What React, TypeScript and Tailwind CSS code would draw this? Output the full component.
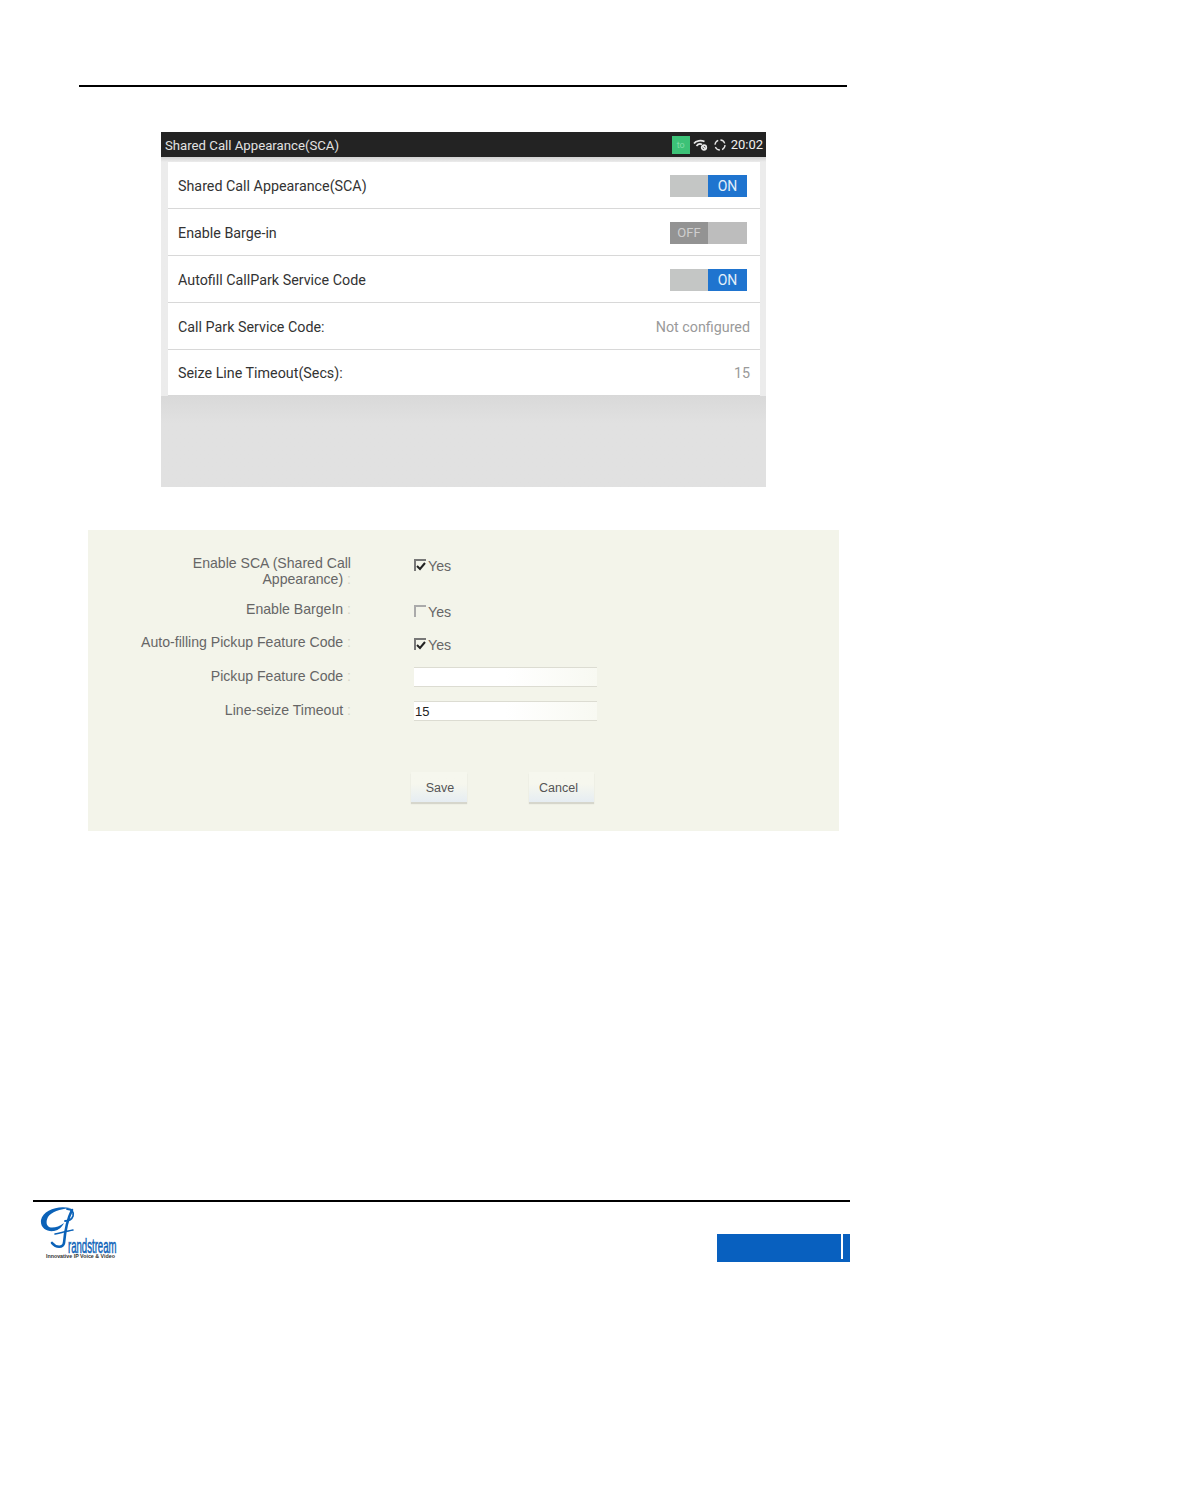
import React from 'react';

const rows = [
  { label: 'Shared Call Appearance(SCA)', toggle: 'on', h: 'h-[47px]' },
  { label: 'Enable Barge-in', toggle: 'off', h: 'h-[47px]' },
  { label: 'Autofill CallPark Service Code', toggle: 'on', h: 'h-[47px]' },
  { label: 'Call Park Service Code:', value: 'Not configured', h: 'h-[47px]' },
  { label: 'Seize Line Timeout(Secs):', value: '15', h: 'h-[46px]' },
];

function Toggle({ on }: { on: boolean }) {
  if (on) {
    return (
      <div className="flex h-[22px] w-[77px] text-[14px] leading-[22px]">
        <div className="w-[38px] bg-[#c4c6c5]" />
        <div className="w-[39px] bg-[#1f74cf] text-center text-[#e4effa]">ON</div>
      </div>
    );
  }
  return (
    <div className="flex h-[22px] w-[77px] text-[13px] leading-[22px]">
      <div className="w-[38px] bg-[#939393] text-center text-[#cfcfcf]">OFF</div>
      <div className="w-[39px] bg-[#bdbdbd]" />
    </div>
  );
}

function StatusIcons() {
  return (
    <div className="flex items-center">
      <div className="h-[18px] w-[18px] bg-[#3cc277] text-center text-[9px] leading-[18px] text-[#7fdca6]">to</div>
      <svg className="ml-[3px]" width="15" height="12" viewBox="0 0 15 12" fill="none" stroke="#e8e8e8" strokeWidth="1.700">
        <path d="M1 4.500C3 1.500 8 1 11.500 2.500" />
        <path d="M3.500 7c1.500-2 3.500-2.500 5.500-1.500" />
        <circle cx="11" cy="8.500" r="2.300" />
        <path d="M9.500 7l3 3" />
      </svg>
      <svg className="ml-[6px]" width="12" height="12" viewBox="0 0 12 12" fill="none" stroke="#e4e4e4" strokeWidth="1.300">
        <circle cx="6" cy="6" r="5" strokeDasharray="5.500 2.300" />
      </svg>
      <span className="ml-[5px] text-[13px] leading-none text-[#f0f0f0]">20:02</span>
    </div>
  );
}

function PhonePanel() {
  return (
    <div className="ml-[161px] mt-[45px] flex h-[355px] w-[605px] flex-col font-['Roboto',sans-serif]">
      <div className="flex h-[25px] items-center justify-between bg-[#232323] pl-[4px] pr-[3px] text-[13.200px] text-[#e2e2e2]">
        <span className="pt-[2px]">Shared Call Appearance(SCA)</span>
        <StatusIcons />
      </div>
      <div className="bg-gradient-to-b from-[#d2d2d2] to-[#ececec] to-[5px] px-[7px] pt-[5px]">
        <div className="w-[592px] bg-white">
          {rows.map((row) => (
            <div
              key={row.label}
              className={`flex ${row.h} items-center justify-between border-b border-[#d8d8d8] pl-[10px] pr-[10px] pt-[1px] text-[14.300px] text-[#333]`}
            >
              <span className="pt-[2px]">{row.label}</span>
              {row.toggle && (
                <div className="mr-[3px]">
                  <Toggle on={row.toggle === 'on'} />
                </div>
              )}
              {row.value && <span className="pt-[2px] text-[#9a9a9a]">{row.value}</span>}
            </div>
          ))}
        </div>
      </div>
      <div className="flex-1 bg-gradient-to-b from-[#d9d9d9] to-[#e1e1e1] to-30%" />
    </div>
  );
}

function FormLabel({ children, className = '' }: { children: React.ReactNode; className?: string }) {
  return (
    <div className={`w-[263px] text-right leading-[16px] ${className}`}>
      {children}
      <span className="text-[#d4d4c8]"> :</span>
    </div>
  );
}

function YesBox({ checked }: { checked: boolean }) {
  return (
    <div className="ml-[63px] flex items-center">
      <div className={`flex h-[12px] w-[12px] items-center justify-center border-l-2 border-t-2 ${checked ? 'border-[#777]' : 'border-[#aaa]'}`}>
        {checked && (
          <svg width="10" height="9" viewBox="0 0 10 9" fill="none" stroke="#222" strokeWidth="2">
            <path d="M1 4l3 3 5-6" />
          </svg>
        )}
      </div>
      <span className="ml-[2px] pt-[2px] text-[14.200px] leading-[16px]">Yes</span>
    </div>
  );
}

function TextBox({ value }: { value?: string }) {
  return (
    <div className="-mt-[1px] ml-[63px] h-[20px] w-[183px] border-y border-[#dcdcd2] bg-gradient-to-r from-white via-white to-[#f8f9f2] pl-[1px] text-[13px] leading-[20px] text-[#222]">
      {value}
    </div>
  );
}

function FormButton({ label, className }: { label: string; className: string }) {
  return (
    <div className={`h-[30px] bg-gradient-to-b from-[#f6f7ee] from-40% to-[#e6edf2] text-center text-[12.500px] leading-[32px] text-[#555] shadow-[0_2px_1px_#d6d6cc] ${className}`}>
      {label}
    </div>
  );
}

function SettingsForm() {
  return (
    <div className="ml-[88px] mt-[43px] h-[301px] w-[751px] bg-[#f3f4ea] pt-[25px] font-['Liberation_Sans',sans-serif] text-[14.100px] text-[#666]">
      <div className="flex h-[32px]">
        <FormLabel>
          Enable SCA (Shared Call
          <br />
          Appearance)
        </FormLabel>
        <div className="pt-[1px]"><YesBox checked /></div>
      </div>
      <div className="mt-[14px] flex h-[16px]">
        <FormLabel>Enable BargeIn</FormLabel>
        <div className="pt-[1px]"><YesBox checked={false} /></div>
      </div>
      <div className="mt-[17px] flex h-[16px]">
        <FormLabel>Auto-filling Pickup Feature Code</FormLabel>
        <div className="pt-[1px]"><YesBox checked /></div>
      </div>
      <div className="mt-[18px] flex h-[16px]">
        <FormLabel>Pickup Feature Code</FormLabel>
        <TextBox />
      </div>
      <div className="mt-[18px] flex h-[16px]">
        <FormLabel>Line-seize Timeout</FormLabel>
        <TextBox value="15" />
      </div>
      <div className="ml-[323px] mt-[54px] flex">
        <FormButton label="Save" className="w-[56px] pl-[2px]" />
        <FormButton label="Cancel" className="ml-[62px] w-[65px] pr-[6px]" />
      </div>
    </div>
  );
}

function Logo() {
  return (
    <svg width="80" height="54" viewBox="0 0 80 54" fill="none">
      {/* script G mark */}
      <path d="M30 1C18-2 3 3 1 13C0 21 7 25 14 24C19 23 22 20 24 16C20 19 16 20.500 12 20.500C7 20.500 5 16 8 10C11 5 20 2 30 1Z" fill="#0b62b8" />
      <path d="M27 2c5 0 7 3 6 7c-1 3-4 5-8 5" stroke="#0b62b8" strokeWidth="1.800" strokeLinecap="round" />
      <path d="M32 3C28 11 25 24 24 36c-1 5-8 5-12 0" stroke="#0b62b8" strokeWidth="2.600" strokeLinecap="round" />
      <path d="M15 27c5-1 12-3 18-4" stroke="#0b62b8" strokeWidth="1.500" strokeLinecap="round" />
      <text transform="translate(28 46) scale(1 2.200)" fontFamily="'Liberation Sans', sans-serif" fontSize="9.600" fill="#0b62b8" stroke="#0b62b8" strokeWidth="0.250">randstream</text>
      <text x="6" y="51" fontFamily="'Liberation Sans', sans-serif" fontWeight="700" fontSize="5.300" fill="#333">Innovative IP Voice &amp; Video</text>
    </svg>
  );
}

function Footer() {
  return (
    <div className="ml-[33px] mt-[369px] w-[817px] border-t-2 border-black">
      <div className="flex items-start justify-between">
        <div className="ml-[7px] mt-[5px]"><Logo /></div>
        <div className="mt-[32px] flex h-[28px] w-[133px] justify-end bg-[#0860bf] pr-[7px]">
          <div className="h-[25px] w-[2px] bg-white" />
        </div>
      </div>
    </div>
  );
}

export default function App() {
  return (
    <div className="h-[1497px] w-[1184px] overflow-hidden bg-white pt-[85px]">
      <div className="ml-[79px] h-[2px] w-[768px] bg-black" />
      <PhonePanel />
      <SettingsForm />
      <Footer />
    </div>
  );
}
